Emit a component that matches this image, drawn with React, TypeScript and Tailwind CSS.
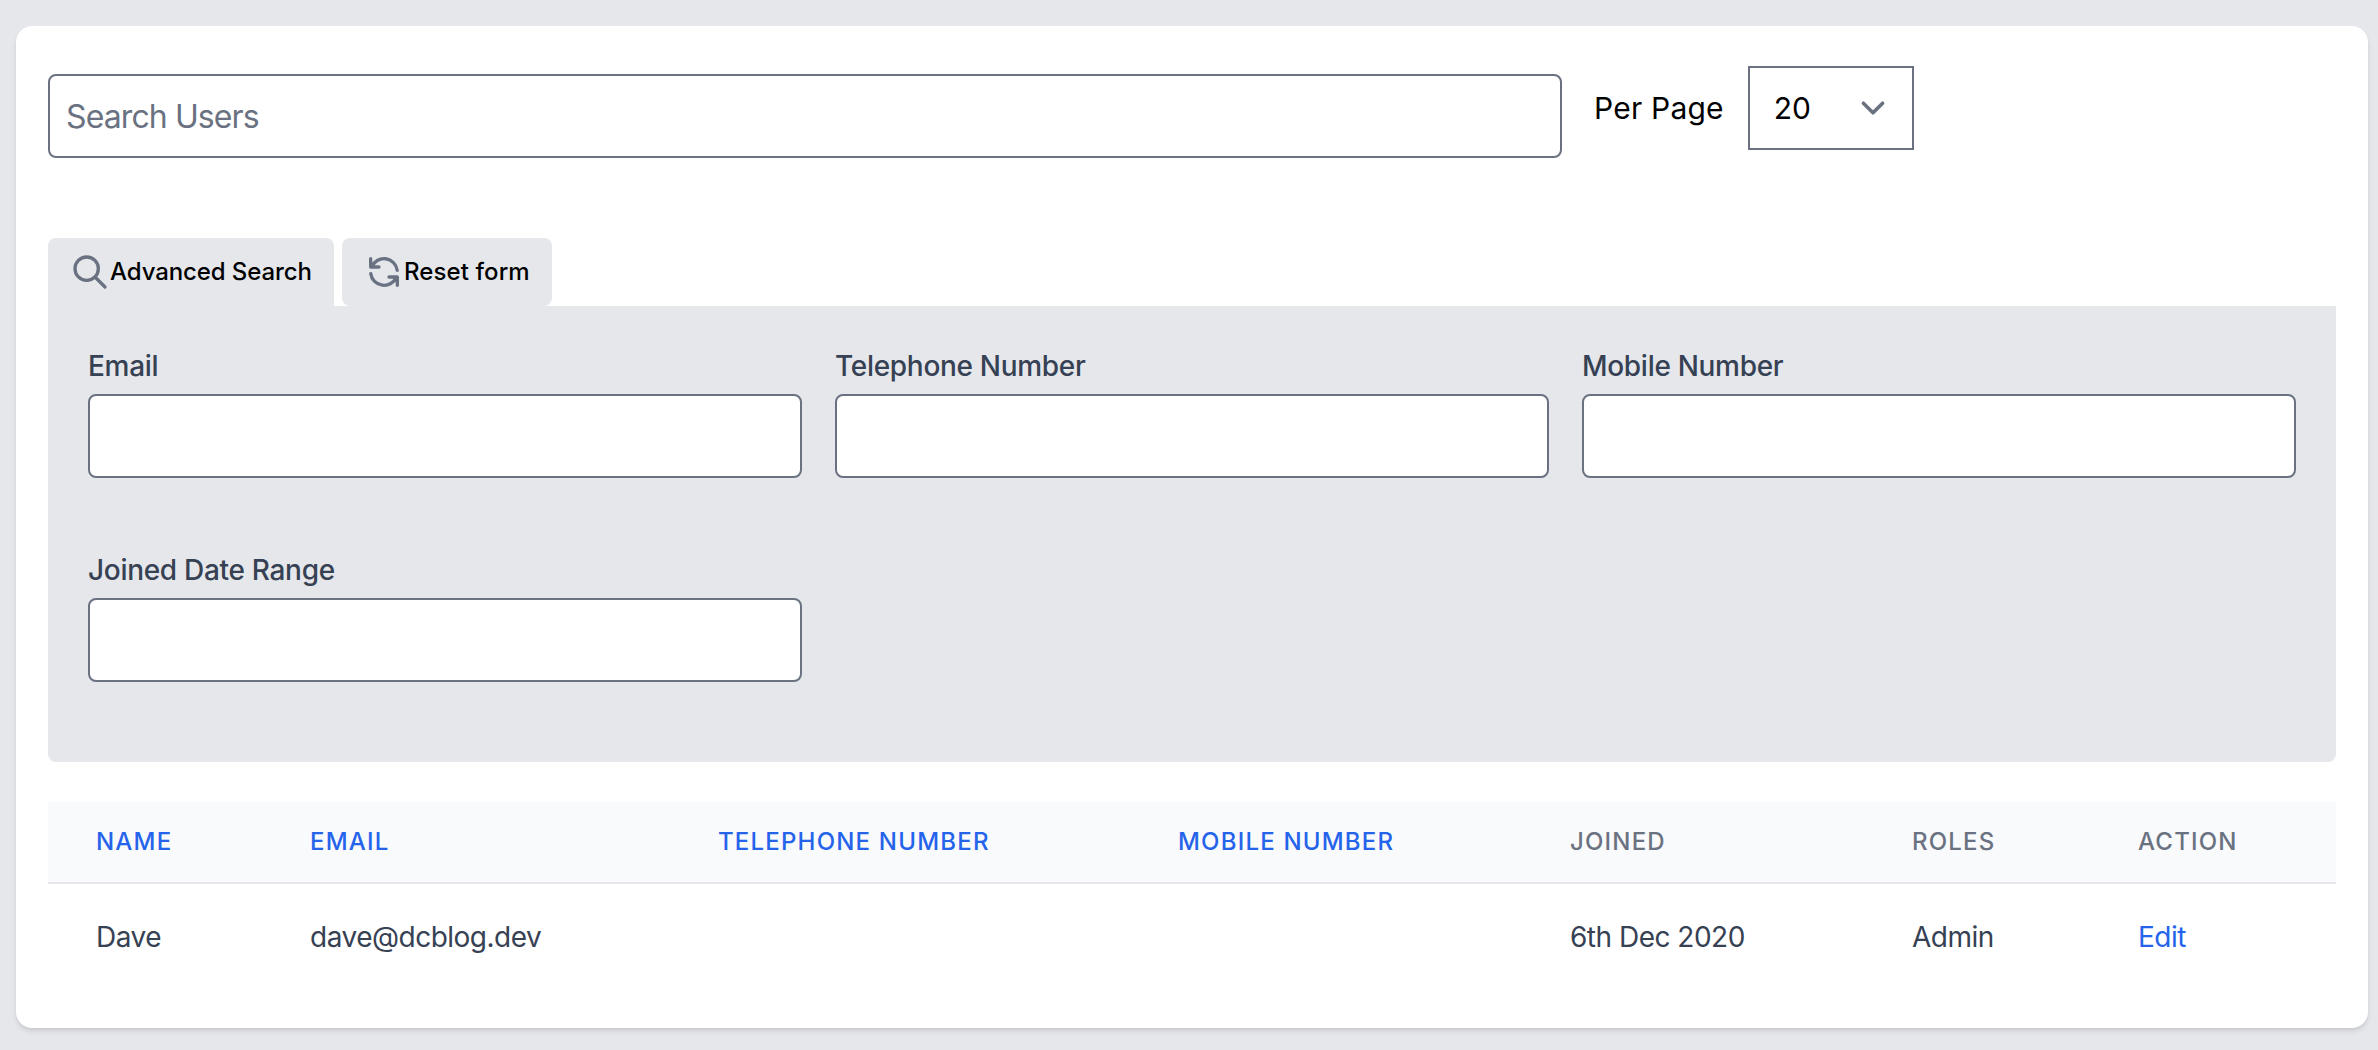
const fontStack = "font-['Inter','Noto_Sans',sans-serif]";

const fields = ["Email", "Telephone Number", "Mobile Number", "Joined Date Range"];

const columns = [
    { label: "NAME", width: "w-[214px]", link: true },
    { label: "EMAIL", width: "w-[408px]", link: true },
    { label: "TELEPHONE NUMBER", width: "w-[460px]", link: true },
    { label: "MOBILE NUMBER", width: "w-[392px]", link: true },
    { label: "JOINED", width: "w-[342px]", link: false },
    { label: "ROLES", width: "w-[226px]", link: false },
    { label: "ACTION", width: "w-[246px]", link: false },
];

function SearchIcon() {
    return (
        <svg viewBox="0 0 24 24" fill="none" stroke="currentColor" strokeWidth={2} strokeLinecap="round" strokeLinejoin="round" className="w-10 h-10 text-gray-500 shrink-0">
            <path d="M21 21l-6-6m2-5a7 7 0 11-14 0 7 7 0 0114 0z" />
        </svg>
    );
}

function ResetIcon() {
    return (
        <svg viewBox="0 0 24 24" fill="none" stroke="currentColor" strokeWidth={2} strokeLinecap="round" strokeLinejoin="round" className="w-10 h-10 text-gray-500 shrink-0">
            <path d="M4 4v5h.582m15.356 2A8.001 8.001 0 004.582 9m0 0H9m11 11v-5h-.581m0 0a8.003 8.003 0 01-15.357-2m15.357 2H15" />
        </svg>
    );
}

function Chevron() {
    return (
        <svg viewBox="0 0 20 20" fill="none" stroke="currentColor" strokeWidth={1.5} strokeLinecap="round" strokeLinejoin="round" className="w-12 h-12 text-gray-500 shrink-0">
            <path d="M6 8l4 4 4-4" />
        </svg>
    );
}

export default function App() {
    return (
        <div className={`min-h-[1050px] bg-gray-200 pt-[26px] pl-4 pr-[10px] ${fontStack}`}>
            <div className="h-[1002px] bg-white rounded-2xl shadow-md px-8 pt-10">
                {/* Search bar */}
                <div className="flex items-start">
                    <input
                        placeholder="Search Users"
                        className="mt-2 w-[1514px] h-[84px] border-2 border-gray-500 rounded-lg px-4 text-[32px] tracking-[-0.9px] placeholder:text-gray-500 bg-white"
                    />
                    <span className="ml-[32px] mt-[20px] text-[30px] tracking-[0.2px] leading-[44px] text-black">Per Page</span>
                    <div className="ml-6 w-[166px] h-[84px] border-2 border-gray-500 flex items-center justify-between pl-[24px] pr-[15px]">
                        <span className="text-[30px] text-black">20</span>
                        <Chevron />
                    </div>
                </div>

                {/* Tabs */}
                <div className="flex mt-20 gap-2">
                    <div className="w-[286px] h-[68px] bg-gray-200 rounded-t-lg flex items-center pl-[22px]">
                        <SearchIcon />
                        <span className="text-[24px] tracking-[-0.1px] font-medium text-black">Advanced Search</span>
                    </div>
                    <div className="w-[210px] h-[68px] bg-gray-200 rounded-lg flex items-center pl-[22px]">
                        <ResetIcon />
                        <span className="text-[24px] tracking-[0.1px] font-medium text-black">Reset form</span>
                    </div>
                </div>

                {/* Advanced search panel */}
                <div className="h-[456px] bg-gray-200 rounded-b-lg px-10 pt-[42px] grid grid-cols-3 gap-x-[33px] gap-y-[74px] content-start">
                    {fields.map((field) => (
                        <div key={field}>
                            <label className="block text-[28px] tracking-[-0.3px] leading-[36px] font-medium text-gray-700">{field}</label>
                            <input className="mt-[10px] w-full h-[84px] border-2 border-gray-500 rounded-lg bg-white" />
                        </div>
                    ))}
                </div>

                {/* Results table */}
                <table className="mt-10 w-full table-fixed">
                    <thead>
                        <tr className="bg-gray-50 border-b-2 border-gray-200 h-[81px]">
                            {columns.map((col) => (
                                <th
                                    key={col.label}
                                    className={`${col.width} pl-12 text-left text-[24px] font-medium tracking-wider ${col.link ? "text-[#2563eb]" : "text-gray-500"}`}
                                >
                                    {col.label}
                                </th>
                            ))}
                        </tr>
                    </thead>
                    <tbody>
                        <tr className="h-[106px] text-[28px] tracking-[-0.5px] text-gray-700">
                            <td className="pl-12">Dave</td>
                            <td className="pl-12">dave@dcblog.dev</td>
                            <td className="pl-12"></td>
                            <td className="pl-12"></td>
                            <td className="pl-12">6th Dec 2020</td>
                            <td className="pl-12">Admin</td>
                            <td className="pl-12 text-[#2563eb]">Edit</td>
                        </tr>
                    </tbody>
                </table>
            </div>
        </div>
    );
}
